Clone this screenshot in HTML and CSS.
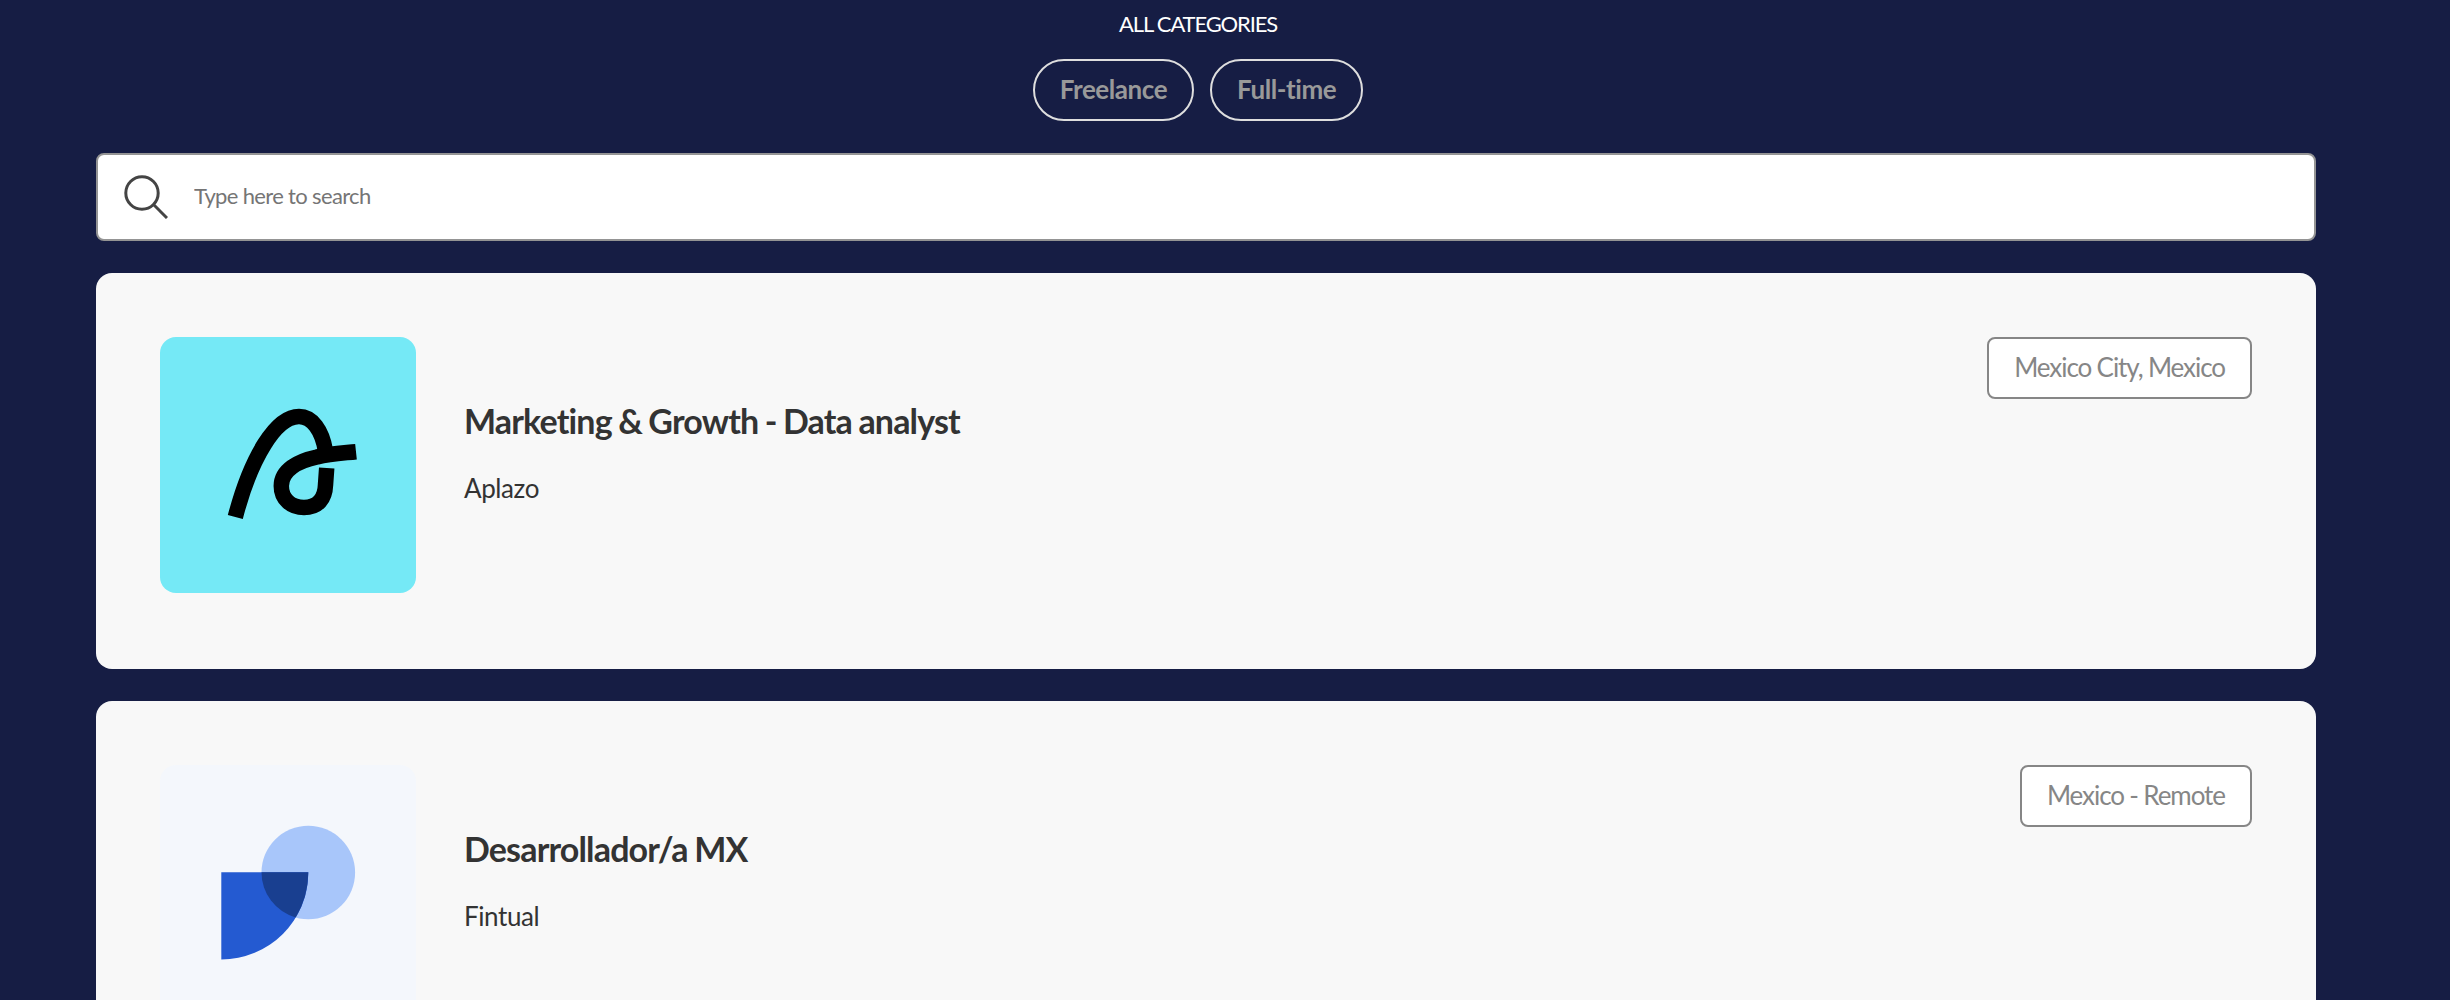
FILE: index.html
```html
<!DOCTYPE html>
<html lang="en">
  <head>
    <meta charset="UTF-8" />
    <meta name="viewport" content="width=device-width, initial-scale=1.0" />
    <title>Jobs</title>
    <link rel="stylesheet" href="styles.css" />
  </head>
  <body>
    <nav class="categories">
      <a class="all-categories">ALL CATEGORIES</a>
      <div class="tags">
        <button class="tag" type="button">Freelance</button>
        <button class="tag" type="button">Full-time</button>
      </div>
    </nav>

    <form class="search">
      <svg class="search-icon" viewBox="0 0 44 44">
        <circle cx="18" cy="18" r="16.2" />
        <path d="M29.5 29.5 L43 43" />
      </svg>
      <input class="search-input" type="text" placeholder="Type here to search" />
    </form>

    <main class="jobs">
      <article class="job">
        <svg class="job-logo" viewBox="0 0 256 256">
          <rect width="256" height="256" fill="#75e9f6" />
          <g fill="none" stroke="#000" stroke-width="15.5">
            <path d="M75.3 180 C91 120 116 79.5 139 79.5 C152 79.5 162 93 165.5 114" />
            <path d="M196 114.7 C184 116 170 116.5 157 120 C138 124 121.3 133 121.3 149 C121.3 162 131 170.5 144 170.5 C158 170.5 165 162 165.5 148 L166.7 131" />
          </g>
        </svg>
        <div class="job-info">
          <h2 class="job-title">Marketing &amp; Growth - Data analyst</h2>
          <p class="job-company">Aplazo</p>
        </div>
        <span class="job-location">Mexico City, Mexico</span>
      </article>

      <article class="job">
        <svg class="job-logo" viewBox="0 0 256 256">
          <rect width="256" height="256" fill="#f4f7fc" />
          <circle cx="148.3" cy="107.5" r="46.8" fill="#a8c6fa" />
          <path d="M61.3 107.3 H148.3 A87 87 0 0 1 61.3 194.5 Z" fill="#245ad1" />
          <path d="M101.5 107.3 H148.3 A87 87 0 0 1 135.7 152.4 A46.8 46.8 0 0 1 101.5 107.3 Z" fill="#193f90" />
        </svg>
        <div class="job-info">
          <h2 class="job-title">Desarrollador/a MX</h2>
          <p class="job-company">Fintual</p>
        </div>
        <span class="job-location">Mexico - Remote</span>
      </article>
    </main>
  </body>
</html>
```
FILE: styles.css
```css
* {
  box-sizing: border-box;
}

body {
  margin: 0;
  padding: 0 134px 0 96px;
  height: 1000px;
  overflow: hidden;
  background-color: #161d44;
  color: #333;
  font-family: Lato, "Open Sans", sans-serif;
}

.categories {
  display: flex;
  flex-direction: column;
  align-items: center;
  padding-top: 10px;
}

.all-categories {
  margin-right: 16px;
  color: #fff;
  font-size: 22px;
  line-height: 28px;
  letter-spacing: -1.15px;
}

.tags {
  display: flex;
  margin-top: 21px;
}

.tag {
  height: 62px;
  margin-right: 16px;
  padding: 0 25px 2px;
  border: 2px solid #dedede;
  border-radius: 31px;
  background: none;
  color: #999;
  font-family: inherit;
  font-size: 26px;
  font-weight: bold;
  letter-spacing: -0.44px;
}

.search {
  display: flex;
  align-items: center;
  height: 88px;
  margin-top: 32px;
  padding: 0 26px;
  border: 2px solid #949494;
  border-radius: 8px;
  background-color: #fff;
}

.search-icon {
  width: 44px;
  height: 44px;
  fill: none;
  stroke: #444;
  stroke-width: 3;
}

.search-input {
  flex: 1;
  margin-left: 26px;
  padding: 0 0 3px;
  border: none;
  outline: none;
  font-family: inherit;
  font-size: 22px;
  letter-spacing: -0.66px;
}

.search-input::placeholder {
  color: #757575;
}

.jobs {
  display: flex;
  flex-direction: column;
  gap: 32px;
  margin-top: 32px;
}

.job {
  display: flex;
  align-items: flex-start;
  height: 396px;
  flex-shrink: 0;
  padding: 64px;
  border-radius: 16px;
  background-color: #f8f8f8;
}

.job-logo {
  width: 256px;
  height: 256px;
  border-radius: 16px;
}

.job-info {
  flex: 1;
  margin-left: 48px;
  padding-top: 62px;
}

.job-title {
  margin: 0;
  font-size: 34px;
  line-height: 44px;
  letter-spacing: -0.84px;
  word-spacing: -1px;
}

.job-company {
  margin: 26px 0 0;
  font-size: 26px;
  line-height: 38px;
  letter-spacing: -0.4px;
}

.job-location {
  height: 62px;
  padding: 0 25px;
  border: 2px solid #868686;
  border-radius: 8px;
  background-color: #fff;
  color: #868686;
  font-size: 26px;
  line-height: 56px;
  letter-spacing: -1.05px;
  word-spacing: -0.3px;
}
```
